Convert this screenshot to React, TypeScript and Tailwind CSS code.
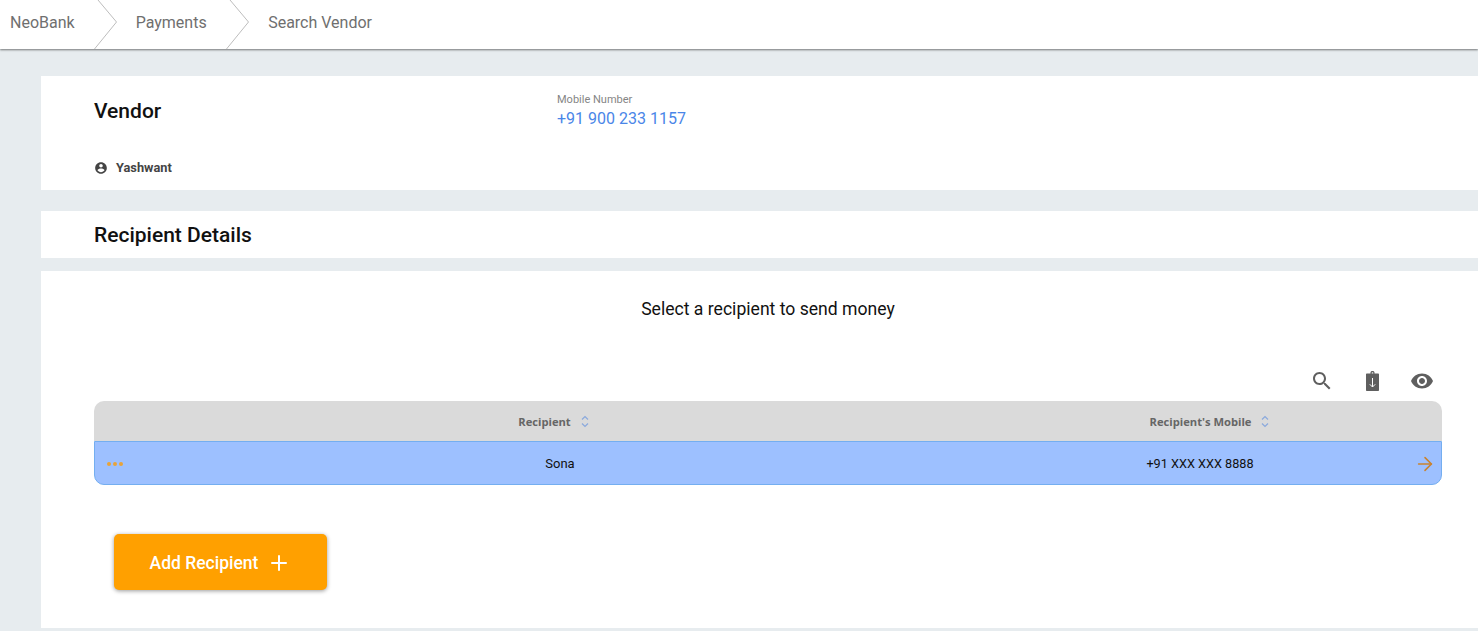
import { ArrowRight, Plus } from 'lucide-react';

const CRUMBS = ['NeoBank', 'Payments', 'Search Vendor'];

function SortIcon() {
  return (
    <svg viewBox="0 0 8 13" className="w-[8px] h-[13px] ml-[10px] fill-none stroke-[#8aa9dd]" strokeWidth={1.2}>
      <path d="M1 4.500l3-3 3 3M1 8.500l3 3 3-3" />
    </svg>
  );
}

function ClipboardDown() {
  return (
    <svg viewBox="0 0 13 20" className="w-[13px] h-[20px]">
      <path
        fill="#5f5f5f"
        fillRule="evenodd"
        d="M4.500 2.500V1.500C4.500.7 5.200 0 6.500 0s2 .7 2 1.500v1h3.500c.6 0 1 .4 1 1V19c0 .6-.4 1-1 1H1c-.6 0-1-.4-1-1V3.500c0-.6.4-1 1-1zM5.700 1.700v.8h1.600v-.8c0-.3-.3-.5-.8-.5s-.8.2-.8.5z"
      />
      <path d="M6.500 7v9M3.800 13.300l2.700 2.700 2.700-2.700" fill="none" stroke="#fff" strokeWidth={1} />
    </svg>
  );
}

function RowDots() {
  return (
    <div className="flex gap-[2px] pl-[12px]">
      <span className="w-[4px] h-[4px] rounded-full bg-[#e8a33a]" />
      <span className="w-[4px] h-[4px] rounded-full bg-[#e8a33a]" />
      <span className="w-[4px] h-[4px] rounded-full bg-[#e8a33a]" />
    </div>
  );
}

export default function App() {
  return (
    <div className="h-[631px] overflow-hidden bg-[#e7ecef] font-['Roboto',sans-serif]">
      <header className="h-[49px] bg-white shadow-[0_1px_2px_rgba(0,0,0,0.5)] flex items-center text-[16px] text-[#6f6f6f]">
        {CRUMBS.map((crumb, i) => (
          <div key={crumb} className="flex items-center h-full">
            <span className={i === 0 ? 'pl-[10px] pr-[19px] pb-[4px]' : 'pl-[18px] pr-[19.500px] pb-[4px]'}>{crumb}</span>
            {i < 2 && (
              <svg viewBox="0 0 24 49" className="w-[24px] h-[49px] fill-none stroke-[#bdbdbd]">
                <path d="M4 0l18.500 22L.5 49" />
              </svg>
            )}
          </div>
        ))}
      </header>

      <div className="pl-[41px] pt-[27px]">
        <section className="h-[114px] bg-white pl-[53px]">
          <div className="flex pt-[17px]">
            <h2 className="w-[463px] pt-[5px] text-[21px] leading-[26px] font-medium text-[#111]">Vendor</h2>
            <div>
              <div className="text-[11px] leading-[13px] text-[#858585]">Mobile Number</div>
              <div className="text-[16px] leading-[26px] text-[#4a86e8]">+91 900 233 1157</div>
            </div>
          </div>
          <div className="flex items-center mt-[26px] text-[12.800px] font-bold text-[#444]">
            <svg viewBox="0 0 24 24" className="w-[14px] h-[14px] mr-[8px] fill-[#444]">
              <path d="M12 2C6.480 2 2 6.480 2 12s4.480 10 10 10 10-4.480 10-10S17.520 2 12 2zm0 3c1.660 0 3 1.340 3 3s-1.340 3-3 3-3-1.340-3-3 1.340-3 3-3zm0 14.200c-2.500 0-4.710-1.280-6-3.220.03-1.990 4-3.080 6-3.080 1.990 0 5.970 1.090 6 3.080-1.290 1.940-3.500 3.220-6 3.220z" />
            </svg>
            Yashwant
          </div>
        </section>

        <section className="mt-[21px] h-[47px] bg-white pl-[53px] pt-[2px] flex items-center">
          <h2 className="text-[21px] font-medium text-[#111]">Recipient Details</h2>
        </section>

        <section className="mt-[13px] h-[357px] bg-white pl-[53px] pr-[36px]">
          <p className="pt-[26px] text-center text-[17.600px] leading-[24px] text-[#111]">Select a recipient to send money</p>

          <div className="flex justify-end items-center mt-[44px] pr-[8px] h-[32px]">
            <svg viewBox="0 0 24 24" className="w-6 h-6 mr-[32px] fill-[#5f5f5f]">
              <path d="M15.500 14h-.79l-.28-.27C15.410 12.590 16 11.110 16 9.500 16 5.910 13.090 3 9.500 3S3 5.910 3 9.500 5.910 16 9.500 16c1.610 0 3.090-.59 4.230-1.570l.27.28v.79l5 4.990L20.490 19l-4.990-5zm-6 0C7.010 14 5 11.990 5 9.500S7.010 5 9.500 5 14 7.010 14 9.500 11.990 14 9.500 14z" />
            </svg>
            <ClipboardDown />
            <svg viewBox="0 0 24 24" className="w-6 h-6 ml-[31px] fill-[#5f5f5f]">
              <path d="M12 4.500C7 4.500 2.730 7.610 1 12c1.730 4.390 6 7.500 11 7.500s9.270-3.110 11-7.500c-1.730-4.390-6-7.500-11-7.500zM12 17c-2.760 0-5-2.240-5-5s2.240-5 5-5 5 2.240 5 5-2.240 5-5 5zm0-8c-1.660 0-3 1.340-3 3s1.340 3 3 3 3-1.340 3-3-1.340-3-3-3z" />
            </svg>
          </div>

          <div className="mt-[4px]">
            <div className="grid grid-cols-[60px_812px_60px_348px_1fr] h-[40px] pt-[2px] bg-[#dadada] rounded-t-[10px] items-center text-[11.200px] font-bold text-[#666] font-['Open_Sans',sans-serif]">
              <div />
              <div className="flex items-center justify-center pr-[13px]">Recipient<SortIcon /></div>
              <div />
              <div className="flex items-center justify-center pl-[19px]">Recipient's Mobile<SortIcon /></div>
            </div>
            <div className="grid grid-cols-[59px_812px_60px_348px_1fr] h-[44px] pt-[2px] bg-[#9dc0ff] border border-[#74aef0] rounded-b-[10px] items-center text-[13px] text-[#111]">
              <RowDots />
              <div className="text-center">Sona</div>
              <div />
              <div className="text-center text-[12.700px]">+91 XXX XXX 8888</div>
              <div className="flex justify-end pr-[5px]">
                <ArrowRight className="w-[22px] h-[22px] text-[#c9822e]" strokeWidth={1.7} />
              </div>
            </div>
          </div>

          <button className="mt-[49px] ml-[20px] w-[213px] h-[56px] pt-[2px] rounded-[5px] bg-[#ffa000] text-white text-[17.500px] font-medium shadow-[0_1px_4px_rgba(0,0,0,0.4)] flex items-center justify-center gap-[9px]">
            Add Recipient
            <Plus className="w-6 h-6" strokeWidth={2} />
          </button>
        </section>
      </div>
    </div>
  );
}
